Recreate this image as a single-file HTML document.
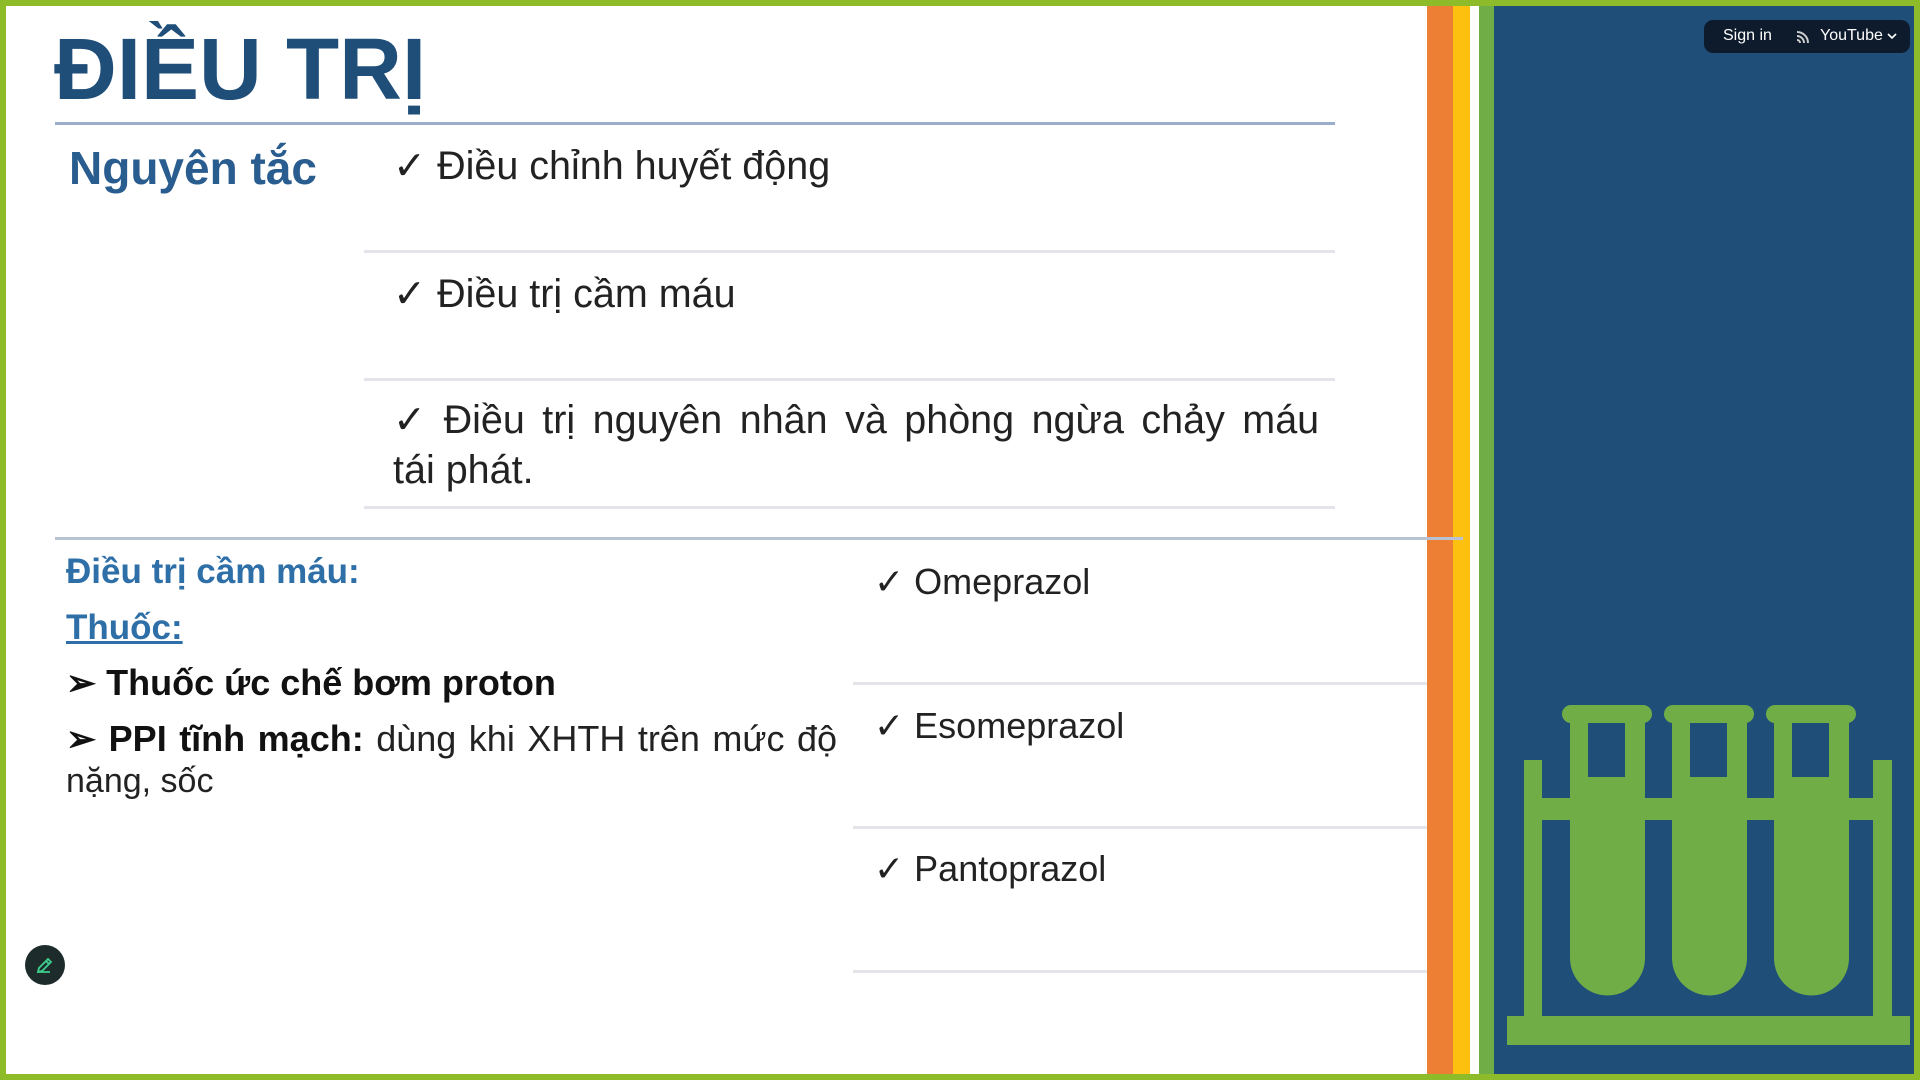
<!DOCTYPE html>
<html><head><meta charset="utf-8"><style>
body{margin:0;width:1920px;height:1080px;overflow:hidden;background:#8dbb2a;font-family:"Liberation Sans",sans-serif;position:relative}
.a{position:absolute}
.t{position:absolute;white-space:nowrap;line-height:1}
.ln{position:absolute;height:3px;background:#e3e4ea}
</style></head><body>
<div class="a" style="left:6px;top:6px;width:1908px;height:1068px;background:#fff"></div>
<div class="a" style="left:1427px;top:6px;width:26px;height:1068px;background:#ec7f34"></div>
<div class="a" style="left:1453px;top:6px;width:17px;height:1068px;background:#fec00f"></div>
<div class="a" style="left:1479px;top:6px;width:15px;height:1068px;background:#70ad47"></div>
<div class="a" style="left:1494px;top:6px;width:420px;height:1068px;background:#1f4e79"></div>

<div class="t" style="left:54px;top:26px;font-size:87px;font-weight:bold;color:#1f4e79">ĐIỀU TRỊ</div>
<div class="a" style="left:55px;top:122px;width:1280px;height:3px;background:#9aaecb"></div>

<div class="t" style="left:69px;top:145px;font-size:46px;font-weight:bold;color:#2a5d8f">Nguyên tắc</div>
<div class="t" style="left:393px;top:147px;font-size:39.5px;color:#222">✓ Điều chỉnh huyết động</div>
<div class="ln" style="left:364px;top:250px;width:971px"></div>
<div class="t" style="left:393px;top:275px;font-size:39.5px;color:#222">✓ Điều trị cầm máu</div>
<div class="ln" style="left:364px;top:378px;width:971px"></div>
<div class="t" style="left:393px;top:401px;font-size:39.5px;color:#222;word-spacing:6.5px">✓ Điều trị nguyên nhân và phòng ngừa chảy máu</div>
<div class="t" style="left:393px;top:451px;font-size:39.5px;color:#222">tái phát.</div>
<div class="ln" style="left:364px;top:506px;width:971px"></div>
<div class="a" style="left:55px;top:537px;width:1408px;height:3px;background:#b9c2d3"></div>

<div class="t" style="left:66px;top:554px;font-size:35px;font-weight:bold;color:#2e6fa8">Điều trị cầm máu:</div>
<div class="t" style="left:66px;top:610px;font-size:35px;font-weight:bold;color:#2e6fa8;text-decoration:underline">Thuốc:</div>
<div class="t" style="left:66px;top:665px;font-size:36px;font-weight:bold;color:#111">➢ Thuốc ức chế bơm proton</div>
<div class="t" style="left:66px;top:721px;font-size:36px;color:#222;word-spacing:2.5px"><b style="color:#111">➢ PPI tĩnh mạch:</b> dùng khi XHTH trên mức độ</div>
<div class="t" style="left:66px;top:764px;font-size:34px;color:#222">nặng, sốc</div>

<div class="t" style="left:874px;top:564px;font-size:36px;color:#222">✓ Omeprazol</div>
<div class="ln" style="left:853px;top:682px;width:574px"></div>
<div class="t" style="left:874px;top:708px;font-size:36px;color:#222">✓ Esomeprazol</div>
<div class="ln" style="left:853px;top:826px;width:574px"></div>
<div class="t" style="left:874px;top:851px;font-size:36px;color:#222">✓ Pantoprazol</div>
<div class="ln" style="left:853px;top:970px;width:574px"></div>

<div class="a" style="left:25px;top:945px;width:40px;height:40px;border-radius:50%;background:#1d2b2b"></div>
<svg class="a" style="left:33px;top:953px" width="24" height="24" viewBox="0 0 24 24"><path d="M5 19l1-4 9-9 3 3-9 9z M13 8l3 3 M5 19h12" fill="none" stroke="#3ecf8e" stroke-width="1.8"/></svg>

<div class="a" style="left:1704px;top:20px;width:206px;height:33px;border-radius:9px;background:#0e1b2c"></div>
<div class="t" style="left:1723px;top:28px;font-size:16px;color:#fff">Sign in</div>
<svg class="a" style="left:1795px;top:29px" width="16" height="16" viewBox="0 0 16 16"><path d="M2 3a11 11 0 0 1 11 11M2 7a7 7 0 0 1 7 7M2 11a3 3 0 0 1 3 3" fill="none" stroke="#ccc" stroke-width="2"/></svg>
<div class="t" style="left:1820px;top:28px;font-size:16px;color:#fff">YouTube</div>
<svg class="a" style="left:1887px;top:32px" width="10" height="8" viewBox="0 0 10 8"><path d="M1 2l4 4 4-4" fill="none" stroke="#fff" stroke-width="1.6"/></svg>

<svg class="a" style="left:0;top:0" width="1920" height="1080">
<g fill="#70ad47">
<rect x="1507" y="1016" width="403" height="29"/>
<rect x="1524" y="760" width="18" height="260"/>
<rect x="1873" y="760" width="19" height="260"/>
<rect x="1542" y="798" width="331" height="22"/>
<g id="tb">
<rect x="1562" y="705" width="90" height="18" rx="9"/>
<path d="M1570 718h75v240a37.5 37.5 0 0 1-75 0z"/>
</g>
<use href="#tb" x="102"/><use href="#tb" x="204"/>
</g>
<g fill="#1f4e79">
<rect x="1588" y="723" width="37" height="54"/>
<rect x="1690" y="723" width="37" height="54"/>
<rect x="1792" y="723" width="37" height="54"/>
</g>
</svg>
</body></html>
